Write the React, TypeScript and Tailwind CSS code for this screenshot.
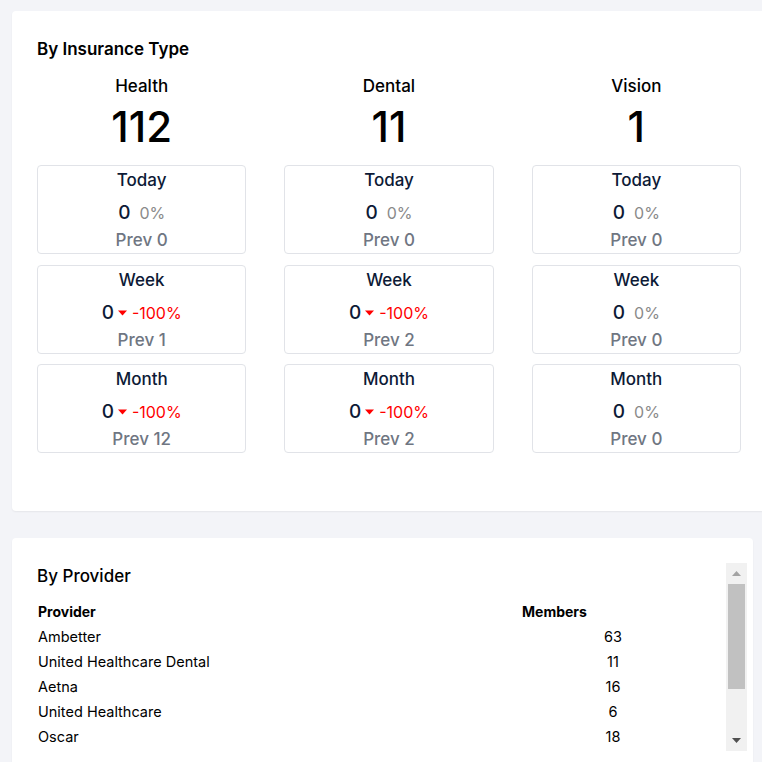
import React from "react";

type Stat = { label: string; value: number; pct: number; prev: number };
type Column = { name: string; total: number; stats: Stat[] };

const COLUMNS: Column[] = [
  {
    name: "Health",
    total: 112,
    stats: [
      { label: "Today", value: 0, pct: 0, prev: 0 },
      { label: "Week", value: 0, pct: -100, prev: 1 },
      { label: "Month", value: 0, pct: -100, prev: 12 },
    ],
  },
  {
    name: "Dental",
    total: 11,
    stats: [
      { label: "Today", value: 0, pct: 0, prev: 0 },
      { label: "Week", value: 0, pct: -100, prev: 2 },
      { label: "Month", value: 0, pct: -100, prev: 2 },
    ],
  },
  {
    name: "Vision",
    total: 1,
    stats: [
      { label: "Today", value: 0, pct: 0, prev: 0 },
      { label: "Week", value: 0, pct: 0, prev: 0 },
      { label: "Month", value: 0, pct: 0, prev: 0 },
    ],
  },
];

const PROVIDERS = [
  { name: "Ambetter", members: 63 },
  { name: "United Healthcare Dental", members: 11 },
  { name: "Aetna", members: 16 },
  { name: "United Healthcare", members: 6 },
  { name: "Oscar", members: 18 },
];

const StatBox = ({ stat }: { stat: Stat }) => (
  <div className="flex h-[89px] flex-col items-center rounded-[4px] border border-[#e1e3e8] pt-px">
    <div className="text-[17px] leading-[26px] font-medium text-[#0d1a36]">{stat.label}</div>
    <div className="mt-[7px] flex items-center leading-[26px]">
      <span className="text-[19px] font-medium text-[#0d1a36]">{stat.value}</span>
      {stat.pct < 0 ? (
        <>
          <svg width="9" height="6" viewBox="0 0 9 6" className="ml-[4px] mr-[5px]">
            <path d="M0 0.5h9L4.5 5.5z" fill="#ff0000" />
          </svg>
          <span className="text-[16px] text-[#ff0000]">{stat.pct}%</span>
        </>
      ) : (
        <span className="ml-[9px] text-[16px] text-[#8a8a8a]">{stat.pct}%</span>
      )}
    </div>
    <div className="mt-[2px] text-[17px] leading-[24px] font-medium text-[#6f7682]">Prev {stat.prev}</div>
  </div>
);

export default function App() {
  return (
    <div
      className="h-[762px] w-[762px] overflow-hidden bg-[#f3f4f8] pt-[11px] pl-[12px]"
      style={{ fontFamily: "Inter, 'Noto Sans', sans-serif" }}
    >
      <div className="w-[754px] rounded-[4px] bg-white px-[25px] pt-[25px] pb-[58px] shadow-[0_1px_2px_rgba(0,0,0,0.06)]">
        <h2 className="text-[17px] leading-[26px] font-semibold text-black">By Insurance Type</h2>
        <div className="mt-[11px] grid grid-cols-3 gap-x-[38px]">
          {COLUMNS.map((col) => (
            <div key={col.name} className="flex flex-col">
              <div className="text-center text-[17px] leading-[26px] font-medium text-black">{col.name}</div>
              <div className="mt-[4px] text-center text-[42px] leading-[48px] font-medium text-black">{col.total}</div>
              <div className="mt-[14px] flex flex-col gap-[10.5px]">
                {col.stats.map((s) => (
                  <StatBox key={s.label} stat={s} />
                ))}
              </div>
            </div>
          ))}
        </div>
      </div>

      <div className="mt-[27px] w-[741px] rounded-[4px] bg-white pt-[25px] pr-[6px] pb-[25px] pl-[25px] shadow-[0_1px_2px_rgba(0,0,0,0.06)]">
        <div className="flex h-[188px]">
          <div className="flex-1 overflow-hidden">
            <h2 className="text-[17px] leading-[26px] font-medium text-black">By Provider</h2>
            <table className="mt-[10px] w-[667px] border-collapse text-[14.5px] text-black">
              <thead>
                <tr className="h-[25px]">
                  <th className="w-[485px] pl-[1px] text-left text-[14px] font-bold">Provider</th>
                  <th className="text-left text-[14px] font-bold">Members</th>
                </tr>
              </thead>
              <tbody>
                {PROVIDERS.map((p) => (
                  <tr key={p.name} className="h-[25px]">
                    <td className="pl-[1px]">{p.name}</td>
                    <td className="text-center">{p.members}</td>
                  </tr>
                ))}
              </tbody>
            </table>
          </div>
          <div className="flex w-[21px] flex-col items-center bg-[#f1f1f1]">
            <div className="flex h-[21px] w-full items-center justify-center">
              <svg width="9" height="5" viewBox="0 0 9 5">
                <path d="M0 5h9L4.5 0z" fill="#a3a3a3" />
              </svg>
            </div>
            <div className="h-[105px] w-[17px] bg-[#c1c1c1]" />
            <div className="flex-1" />
            <div className="flex h-[21px] w-full items-center justify-center">
              <svg width="9" height="5" viewBox="0 0 9 5">
                <path d="M0 0h9L4.5 5z" fill="#505050" />
              </svg>
            </div>
          </div>
        </div>
      </div>
    </div>
  );
}
